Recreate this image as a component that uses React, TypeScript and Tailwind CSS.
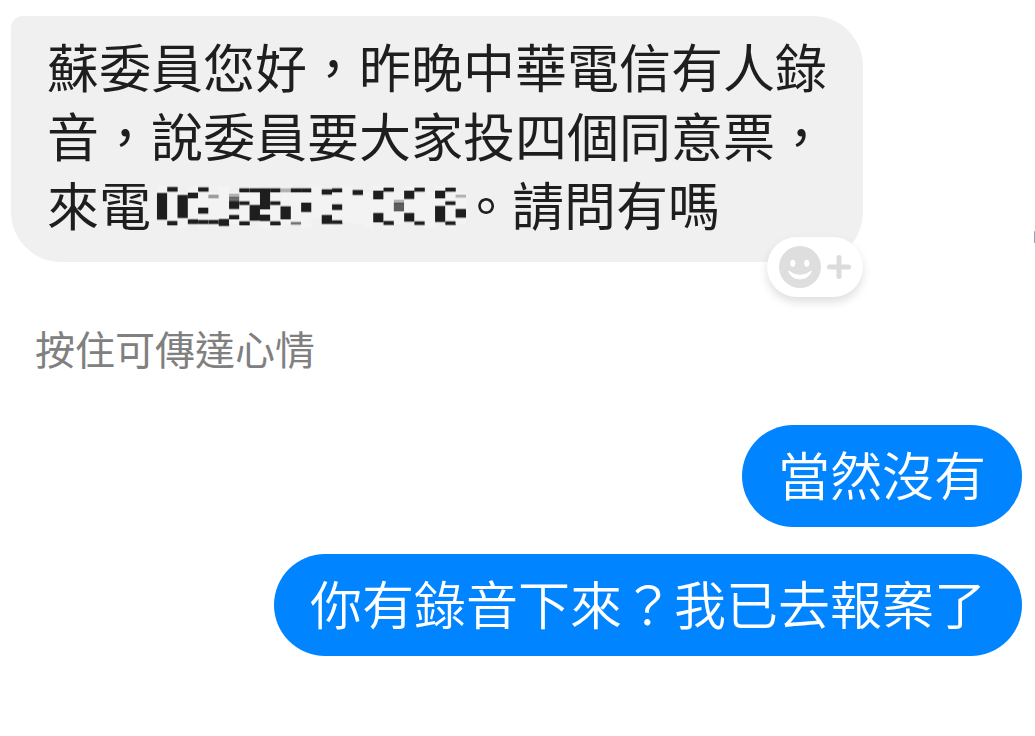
import clsx from 'clsx';

interface BubbleProps {
  mine?: boolean;
  children: React.ReactNode;
}

type Run = [top: number, bottom: number, opacity?: number];

// One entry per mosaic column, each with its dark vertical runs
const MOSAIC: Run[][] = [
  [[70, 148]],
  [[52, 64], [154, 165]],
  [[76, 143]],
  [[69, 84], [149, 161]],
  [[53, 64], [114, 130], [151, 161]],
  [[75, 84, 0.4], [151, 161]],
  [[148, 167]],
  [[72, 84, 0.3], [82, 94, 0.6], [94, 116], [136, 147]],
  [[56, 66], [95, 104], [155, 165]],
  [[56, 66], [106, 151]],
  [[56, 117], [135, 152]],
  [[56, 66], [95, 104], [155, 165]],
  [[56, 66, 0.3], [110, 147]],
  [[56, 66], [157, 163, 0.6]],
  [[56, 66], [99, 125]],
  [],
  [[59, 73], [136, 161]],
  [[56, 66], [104, 119], [152, 161]],
  [],
  [[61, 74]],
  [],
  [[63, 87], [130, 156]],
  [[54, 64], [154, 164]],
  [[90, 100, 0.3], [99, 123, 0.7]],
  [[63, 86], [130, 154]],
  [[54, 64], [155, 164]],
  [],
  [[63, 84], [109, 155]],
  [[54, 64], [95, 104], [155, 164]],
  [[75, 82, 0.3], [118, 142]],
];

const COL = 31;

const HiddenNumber = () => (
  <svg
    aria-hidden="true"
    viewBox="-18 42 930 138"
    preserveAspectRatio="none"
    className="inline-block w-[309px] h-[46px] overflow-visible align-[-4px]"
  >
    {MOSAIC.map((runs, i) => (
      <g key={i}>
        <rect x={i * COL} y={i % 3 === 0 ? 48 : 66} width={COL} height={i % 2 ? 96 : 110} fill="#f3f3f3" />
        {runs.map(([top, bottom, opacity = 1]) => (
          <g key={top} fill="#1e1e1e" opacity={opacity}>
            <rect x={i * COL} y={top - 3} width={COL} height={bottom - top + 6} opacity={0.35} />
            <rect x={i * COL} y={top} width={COL} height={bottom - top} />
          </g>
        ))}
      </g>
    ))}
  </svg>
);

const ReactButton = () => (
  <button
    type="button"
    aria-label="傳達心情"
    className="absolute right-0 -bottom-[35px] flex items-center gap-[6px] h-[60px] px-3 rounded-full bg-white shadow-[0_5px_10px_rgba(0,0,0,0.13)]"
  >
    <svg viewBox="0 0 42 42" className="w-[42px] h-[42px]">
      <circle cx="21" cy="21" r="21" fill="#dedede" />
      <ellipse cx="13.8" cy="17.2" rx="2.6" ry="3.5" fill="#fff" />
      <ellipse cx="27.8" cy="17.2" rx="2.6" ry="3.5" fill="#fff" />
      <path d="M9.6 25 Q21 33.5 32.4 25 C29.5 35.5 12.5 35.5 9.6 25Z" fill="#fff" stroke="#fff" strokeWidth="1" strokeLinejoin="round" />
    </svg>
    <svg viewBox="0 0 24 24" className="w-6 h-6">
      <path d="M12 2.5v19M2.5 12h19" stroke="#dcdcdc" strokeWidth="5" strokeLinecap="round" />
    </svg>
  </button>
);

const Bubble = ({ mine, children }: BubbleProps) => (
  <div
    className={clsx(
      'relative max-w-[852px] px-9 text-[52px] leading-[69px]',
      mine
        ? 'self-end pt-[14px] pb-[19px] rounded-[51px] bg-[#0084ff] text-white font-[350]'
        : 'self-start pt-[15px] pb-6 rounded-[50px] rounded-tl-[12px] bg-[#f0f0f0] text-[#1e1e1e]'
    )}
  >
    {children}
  </div>
);

export default function App() {
  return (
    <main
      lang="zh-Hant"
      className="relative flex flex-col min-h-screen pt-4 pl-[11px] pr-[13px] bg-white font-['Noto_Sans_CJK_TC',sans-serif]"
    >
      <Bubble>
        <p>
          蘇委員您好，昨晚中華電信有人錄音，說委員要大家投四個同意票，來電
          <HiddenNumber />
          。請問有嗎
        </p>
        <ReactButton />
      </Bubble>

      <p className="mt-14 pl-6 text-[40px] leading-[60px] text-[#808080]">按住可傳達心情</p>

      <div className="mt-[47px] flex flex-col gap-[27px]">
        <Bubble mine>
          <p>當然沒有</p>
        </Bubble>
        <Bubble mine>
          <p>你有錄音下來？我已去報案了</p>
        </Bubble>
      </div>

      {/* Edge of the next control, mostly off screen */}
      <span className="absolute right-0 top-[231px] w-px h-3 rounded-full bg-gray-400" />
    </main>
  );
}
